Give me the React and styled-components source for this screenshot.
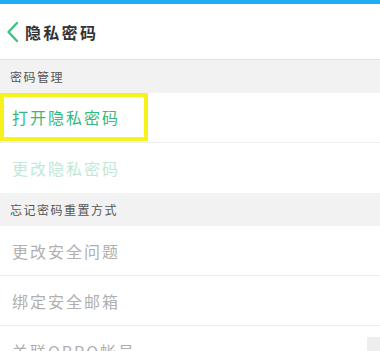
import React from "react";
import styled, { createGlobalStyle } from "styled-components";

const GlobalStyle = createGlobalStyle`
  html, body {
    margin: 0;
    padding: 0;
    background: #ffffff;
    font-family: "Noto Sans CJK SC", "Noto Sans", sans-serif;
  }
`;

const Page = styled.div`
  width: 380px;
  height: 351px;
  overflow: hidden;
  background: #ffffff;
`;

const StatusBar = styled.div`
  height: 4px;
  background: #1caef0;
`;

const Header = styled.div`
  display: flex;
  align-items: center;
  height: 55px;
  padding-left: 6px;
  border-bottom: 1px solid #e4e4e4;
`;

const BackIcon = styled.svg`
  width: 13px;
  height: 22px;
  margin-right: 6px;
  margin-top: 1px;
`;

const Title = styled.h1`
  margin: 0;
  font-size: 16px;
  font-weight: 700;
  letter-spacing: 2.3px;
  color: #333333;
`;

const SectionHead = styled.div`
  display: flex;
  align-items: center;
  height: 33px;
  padding-left: 10px;
  background: #f2f2f2;
  font-size: 12px;
  letter-spacing: 1.5px;
  color: #555555;
`;

const Row = styled.div`
  display: flex;
  align-items: center;
  height: 50px;
  padding-left: 12px;
  font-size: 16px;
  letter-spacing: 2px;
  color: ${(p) => p.$color};
  border-bottom: ${(p) => (p.$line ? "1px solid #eeeeee" : "none")};
  box-sizing: border-box;
`;

const Highlight = styled.div`
  position: relative;
  height: 50px;
  border-bottom: 1px solid #eeeeee;
  box-sizing: border-box;

  &::after {
    content: "";
    position: absolute;
    left: 0;
    top: 0;
    width: 148px;
    height: 48px;
    border: 4px solid #f7f21c;
    box-sizing: border-box;
    pointer-events: none;
  }
`;

const Corner = styled.div`
  margin-left: auto;
  align-self: flex-start;
  margin-top: 11px;
  width: 13px;
  height: 16px;
  background: #eeeeee;
`;

const GREEN = "#35b97e";
const LIGHT_GREEN = "#bfe9d6";
const GRAY = "#b0b0b0";

export default function App() {
  return (
    <Page>
      <GlobalStyle />
      <StatusBar />
      <Header>
        <BackIcon viewBox="0 0 13 22">
          <polyline
            points="11,2 2.5,11 11,20"
            fill="none"
            stroke="#3fbf86"
            strokeWidth="2.4"
            strokeLinecap="round"
            strokeLinejoin="round"
          />
        </BackIcon>
        <Title>隐私密码</Title>
      </Header>
      <SectionHead>密码管理</SectionHead>
      <Highlight>
        <Row $color={GREEN} style={{ height: 48 }}>打开隐私密码</Row>
      </Highlight>
      <Row $color={LIGHT_GREEN}>更改隐私密码</Row>
      <SectionHead>忘记密码重置方式</SectionHead>
      <Row $color={GRAY} $line>更改安全问题</Row>
      <Row $color={GRAY} $line>绑定安全邮箱</Row>
      <Row $color={GRAY}>
        关联OPPO帐号
        <Corner />
      </Row>
    </Page>
  );
}
